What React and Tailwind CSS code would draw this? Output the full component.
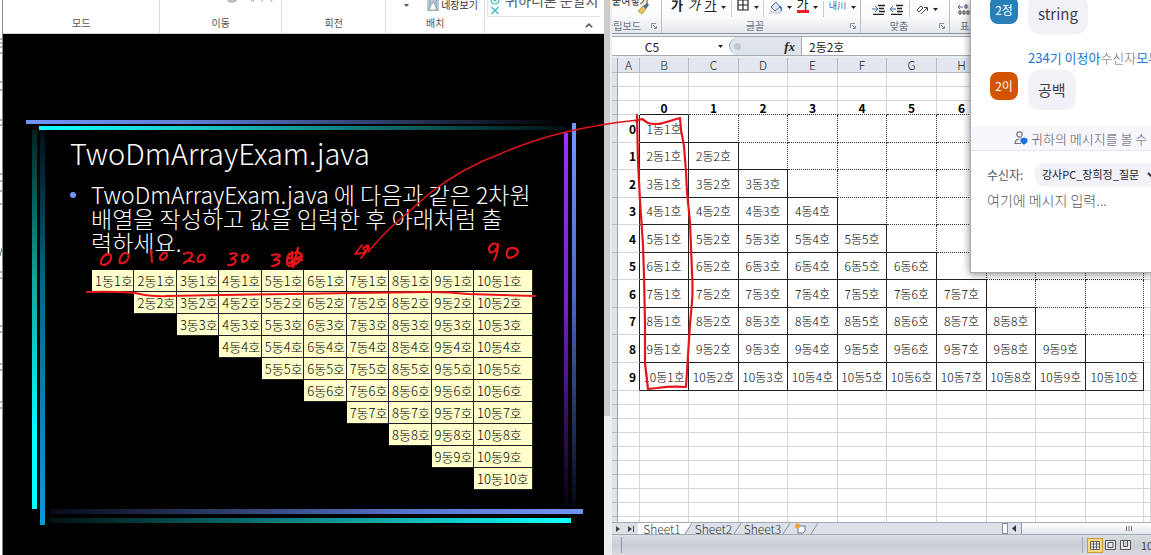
import React from "react";

const KR = "font-['Noto_Sans_CJK_KR','Liberation_Sans',sans-serif]";
const NUMBERS = [1, 2, 3, 4, 5, 6, 7, 8, 9, 10];

function Caret({ className = "" }) {
  return (
    <svg viewBox="0 0 5 3" className={`h-[3px] w-[5px] shrink-0 ${className}`} aria-hidden="true">
      <path d="M0 0h5L2.5 3z" fill="currentColor" />
    </svg>
  );
}

function ViewerGroup({ label, className, children }) {
  return (
    <div className={`flex min-w-0 flex-col justify-end border-r border-[#dcdcdc] ${className}`}>
      {children}
      <div className="pb-[2px] text-center text-[10px] leading-4 text-[#555]">{label}</div>
    </div>
  );
}

function ViewerRibbon() {
  return (
    <header className="flex h-[34px] shrink-0 overflow-hidden border-b border-[#cfd4d1] bg-white">
      <ViewerGroup label="모드" className="flex-[158_1_0%]" />
      <ViewerGroup label="이동" className="flex-[122_1_0%]">
        <div className="flex h-4 items-end justify-end gap-2 pr-2 pb-3">
          <svg viewBox="0 0 12 12" className="h-3 w-3 shrink-0" aria-hidden="true">
            <circle cx="6" cy="6" r="6" fill="#bbb" />
            <path d="M3 6h6M6 3l3 3-3 3" stroke="#fff" strokeWidth="1.4" fill="none" />
          </svg>
          <span className="text-[10px] leading-3 text-[#999]">페이지</span>
        </div>
      </ViewerGroup>
      <ViewerGroup label="회전" className="flex-[104_1_0%]" />
      <ViewerGroup label="배치" className="flex-[99_1_0%]">
        <div className="flex h-4 items-end pb-1 pl-[18px]">
          <Caret className="mb-1 text-[#555]" />
          <svg viewBox="0 0 12 12" className="mr-[2px] ml-[18px] h-3 w-3 shrink-0" aria-hidden="true">
            <rect width="12" height="12" fill="#b7c9d8" />
            <path d="M1 11l5-8 5 8zM3 0v12M9 0v12" fill="#fff" stroke="#7795ad" strokeWidth=".7" />
          </svg>
          <button className="text-[10px] leading-3 whitespace-nowrap text-[#333]">네장보기</button>
        </div>
      </ViewerGroup>
      <div className="flex flex-[118_1_0%] flex-col justify-end overflow-hidden pl-[2px]">
        <div className="mr-1 flex shrink-0 items-end border-b border-l border-[#e3e3e3] pl-[2px]">
          <svg viewBox="0 0 10 20" className="h-5 w-[10px] shrink-0" fill="none" stroke="#35b4cc" aria-hidden="true">
            <circle cx="5" cy="4" r="4" strokeWidth="1.2" />
            <circle cx="5" cy="4" r="1" strokeWidth="1.2" />
            <path d="M1.5 11l7 7M8.500 11l-7 7" strokeWidth="1.2" />
          </svg>
          <span className="pb-2 pl-[5px] text-[14px] leading-4 whitespace-nowrap text-[#555]">귀하디론 문알지</span>
        </div>
        <button aria-label="리본 접기" className="mr-[11px] flex h-4 shrink-0 items-center self-end">
          <svg viewBox="0 0 8 5" className="h-[5px] w-2" fill="none" stroke="#555" strokeWidth="1.6" aria-hidden="true">
            <path d="M.8 4.300L4 1.200l3.200 3.100" />
          </svg>
        </button>
      </div>
    </header>
  );
}

function SlideFrame() {
  return (
    <svg className="pointer-events-none absolute inset-0 h-full w-full" aria-hidden="true">
      <defs>
        <linearGradient id="topBlue"><stop offset="0" stopColor="#7094f5" /><stop offset=".3" stopColor="#6080d8" /><stop offset="1" stopColor="#000" /></linearGradient>
        <linearGradient id="topCyan"><stop offset="0" stopColor="#1ff" /><stop offset=".3" stopColor="#1cc9c9" /><stop offset="1" stopColor="#001010" /></linearGradient>
        <linearGradient id="bottomBlue"><stop offset="0" stopColor="#080a16" /><stop offset=".7" stopColor="#5878d0" /><stop offset="1" stopColor="#7094f5" /></linearGradient>
        <linearGradient id="bottomCyan"><stop offset="0" stopColor="#001010" /><stop offset=".7" stopColor="#12b9b9" /><stop offset="1" stopColor="#1ff" /></linearGradient>
        <linearGradient id="leftCyan" x2="0" y2="1"><stop offset="0" stopColor="#022" /><stop offset=".4" stopColor="#10a59f" /><stop offset=".8" stopColor="#0ff" /></linearGradient>
        <linearGradient id="leftBlue" x2="0" y2="1"><stop offset="0" stopColor="#000f18" /><stop offset=".4" stopColor="#07688c" /><stop offset="1" stopColor="#0d9bd0" /></linearGradient>
        <linearGradient id="rightPurple" x2="0" y2="1"><stop offset="0" stopColor="#a030ff" /><stop offset=".45" stopColor="#7a20c8" /><stop offset="1" stopColor="#080010" /></linearGradient>
        <linearGradient id="rightBlue" x2="0" y2="1"><stop offset="0" stopColor="#7099ff" /><stop offset=".45" stopColor="#4a68c0" /><stop offset="1" stopColor="#050814" /></linearGradient>
      </defs>
      <rect x="23" y="86" width="540" height="4" fill="url(#topBlue)" />
      <rect x="36" y="92" width="527" height="4" fill="url(#topCyan)" />
      <rect x="29" y="96" width="5" height="379" fill="url(#leftCyan)" />
      <rect x="37" y="96" width="5" height="395" fill="url(#leftBlue)" />
      <rect x="47" y="475" width="533" height="5" fill="url(#bottomBlue)" />
      <rect x="46" y="484" width="522" height="5" fill="url(#bottomCyan)" />
      <rect x="561" y="99" width="4" height="373" fill="url(#rightPurple)" />
      <rect x="569" y="89" width="4" height="383" fill="url(#rightBlue)" />
    </svg>
  );
}

function SlideTable() {
  return (
    <table className="mt-4 ml-[22px] w-[441px] table-fixed border-separate border-spacing-0 text-[13px] leading-none font-light text-black">
      <colgroup>
        {NUMBERS.map((n) => <col key={n} className={n === 10 ? "w-[59px]" : ""} />)}
      </colgroup>
      <tbody>
        {NUMBERS.map((room) => (
          <tr key={room}>
            {NUMBERS.map((block) =>
              block < room ? (
                <td key={block} className="h-[22px] p-0" />
              ) : (
                <td key={block} className="h-[22px] overflow-hidden border-r border-b border-[#222] bg-[#ffffcc] py-0 pr-0 pl-[3px] whitespace-nowrap">
                  {block}동{room}호
                </td>
              )
            )}
          </tr>
        ))}
      </tbody>
    </table>
  );
}

function Viewer() {
  return (
    <section className="flex min-w-0 flex-[612_1_0%]">
      <div className="w-[3px] shrink-0 border-r border-[#888] bg-white">
        <svg className="h-full w-[2px]" fill="none" stroke="#4d7a55" aria-hidden="true">
          <path d="M0 39h2M0 43h2M0 47h2M0 53h2M0 82h2M0 90h2M0 120h2M0 125h2M0 174h2M0 181h2M0 191h2M0 204h2M0 256l2-8M0 272h2M0 278h2M0 326h2M0 332h2M0 364h2M0 370h2M0 402h2M0 408h2" />
        </svg>
      </div>
      <div className="flex min-w-0 flex-1 flex-col">
        <ViewerRibbon />
        <main className="relative flex-1 overflow-hidden bg-black pt-[102px] pl-[67px] text-white">
          <SlideFrame />
          <h1 className="text-[29px] leading-8 font-light">TwoDmArrayExam.java</h1>
          <ul className="mt-[14px] mr-[58px]">
            <li className="flex items-start text-[23px] leading-6 font-light">
              <span className="mt-[10px] mr-[15px] h-[6px] w-[6px] shrink-0 rounded-full bg-[#7094f5]" />
              <p className="whitespace-nowrap">
                TwoDmArrayExam.java 에 다음과 같은 2차원<br />배열을 작성하고 값을 입력한 후 아래처럼 출<br />력하세요.
              </p>
            </li>
          </ul>
          <SlideTable />
        </main>
      </div>
      <div className="w-2 shrink-0 bg-[#ededf0]">
        <div className="h-3/4 w-[6px] bg-[#cbcbcd]" />
      </div>
    </section>
  );
}

function ExcelGroup({ label, className, children, launcher = true }) {
  return (
    <div className={`relative flex flex-col justify-end border-r border-[#b9bfc9] ${className}`}>
      <div className="flex h-[18px] items-center overflow-hidden">{children}</div>
      <div className="flex h-[15px] items-center justify-center pr-3 text-[10px] leading-none whitespace-nowrap text-[#6b7685]">{label}</div>
      {launcher && (
        <svg viewBox="0 0 6 6" className="absolute right-1 bottom-1 h-[6px] w-[6px]" fill="none" stroke="#8a929e" aria-hidden="true">
          <path d="M.5 5V.500H5M2 2l3 3M5.500 3v2.500H3" />
        </svg>
      )}
    </div>
  );
}

function ToolDivider() {
  return <span className="h-4 w-px shrink-0 bg-[#c9ced6]" />;
}

function ExcelRibbon() {
  return (
    <div className="flex h-[34px] shrink-0 overflow-hidden border-b border-[#8e949e] bg-linear-to-b from-white via-[#fafbfc] to-[#e4e7ec] text-[#222]">
      <ExcelGroup label={<span className="-ml-4">클립보드</span>} className="w-[50px] shrink-0">
        <span className="-mt-4 text-[10px] leading-3 whitespace-nowrap">붙여넣기</span>
        <svg viewBox="0 0 12 12" className="-ml-3 h-3 w-3 shrink-0" aria-hidden="true">
          <path d="M6 3l3 3-4 5-4-3z" fill="#e8c35a" stroke="#a88224" strokeWidth=".7" />
          <path d="M6 3l4-3 2 2-3 4z" fill="#526b9a" />
        </svg>
      </ExcelGroup>
      <ExcelGroup label="글꼴" className="w-[199px] shrink-0 [&_button]:-mt-2 [&_button]:text-[13px] [&_button]:leading-3">
        <div className="flex w-full items-center justify-between pr-1 pl-[9px]">
          <button className="font-bold">가</button>
          <button className="italic">가</button>
          <button className="underline">가</button>
          <Caret className="-mt-1" />
          <ToolDivider />
          <svg viewBox="0 0 12 12" className="-mt-2 h-3 w-3" fill="none" stroke="#222" strokeWidth="1.2" aria-hidden="true">
            <path d="M1 1h10v10H1zM6 1v10M1 6h10" />
          </svg>
          <Caret className="-mt-1" />
          <ToolDivider />
          <svg viewBox="0 0 13 13" className="-mt-1 h-[13px] w-[13px]" aria-hidden="true">
            <path d="M2 6l5-5 4 5-5 4z" fill="#dfe8f5" stroke="#4b6796" />
            <path d="M11 5q2 3 1 5" stroke="#3a6ec0" strokeWidth="1.5" fill="none" />
            <path d="M0 10h12v3H0z" fill="#d8dade" />
          </svg>
          <Caret className="-mt-1" />
          <span className="flex flex-col items-center">
            <button>가</button>
            <span className="h-[3px] w-3 bg-[#ed1c24]" />
          </span>
          <Caret className="-mt-1" />
          <ToolDivider />
          <span className="-mt-2 text-[9px] leading-[9px] text-[#3c5ca8]">내川</span>
          <Caret className="-mt-1" />
        </div>
      </ExcelGroup>
      <ExcelGroup label="맞춤" className="w-[89px] shrink-0">
        <div className="flex w-full items-center justify-around px-2">
          {[0, 1].map((i) => (
            <svg key={i} viewBox="0 0 13 11" className="h-[11px] w-[13px]" fill="none" aria-hidden="true">
              <path d="M6 1.500h7M7 4.500h5M7 7.500h6M1 10.500h11" stroke="#222" strokeWidth="1.400" />
              <path d={i ? "M0 5h6M3 2L0 5l3 3" : "M0 5h6M3 2L6 5 3 8"} stroke="#3f67ad" />
            </svg>
          ))}
          <ToolDivider />
          <svg viewBox="0 0 12 12" className="h-3 w-3" fill="none" stroke="#444" aria-hidden="true">
            <path d="M1 7l4-4 2 2-4 4zM5 11l6-6M8 4.500h3.500V8" />
          </svg>
          <Caret />
        </div>
      </ExcelGroup>
      <ExcelGroup label="표시 형식" launcher={false} className="w-[72px] shrink-0">
        <div className="flex items-center gap-1 pl-2">
          <svg viewBox="0 0 12 11" className="h-[11px] w-3" fill="none" stroke="#444" aria-hidden="true">
            <path d="M0 3h5M2 1L0 3l2 2" stroke="#3f67ad" />
            <path d="M7 1h2v3H7zM1 7h2v3H1zM5 7h2v3H5zM9 7h2v3H9z" />
          </svg>
        </div>
      </ExcelGroup>
    </div>
  );
}

function FormulaBar() {
  return (
    <div className="mt-[2px] flex h-5 shrink-0 border-y border-[#a5abb5] bg-white text-[12px] leading-none text-[#222]">
      <label className="flex w-[117px] shrink-0 items-center">
        <input aria-label="이름 상자" defaultValue="C5" className="w-20 min-w-0 bg-transparent text-center outline-none" />
        <Caret className="mr-[6px] ml-auto" />
      </label>
      <div className="flex w-[72px] shrink-0 items-center justify-between rounded-l-full border-l border-[#a5abb5] bg-[#dfe3eb] pr-[6px] pl-1">
        <span className="h-[7px] w-[7px] rounded-full bg-[#c1c6cf]" />
        <button aria-label="함수 삽입" className="font-['Liberation_Serif',serif] text-[13px] leading-none font-bold italic">fx</button>
      </div>
      <input aria-label="수식 입력줄" defaultValue="2동2호" className="min-w-0 flex-1 border-l border-[#a5abb5] pl-[7px] outline-none" />
    </div>
  );
}

const COLUMNS = ["A", "B", "C", "D", "E", "F", "G", "H", "I", "J", "K", "L"];
const COLUMN_WIDTHS = [
  "w-[22px]", "w-[49px]", "w-[50px]", "w-[49px]", "w-[50px]", "w-[49px]",
  "w-[50px]", "w-[50px]", "w-[49px]", "w-[50px]", "w-[58px]", "",
];
const GRID_R = "border-r border-r-[#d3d6db]";
const GRID_B = "border-b border-b-[#d3d6db]";
const SOLID_R = "border-r border-r-[#222]";
const SOLID_B = "border-b border-b-[#222]";
const DOTTED_R = "border-r [border-right-style:dotted] border-r-[#333]";
const DOTTED_B = "border-b [border-bottom-style:dotted] border-b-[#333]";

function rightEdge(row, col) {
  if (col < 0) return SOLID_R;
  if (col > 9) return GRID_R;
  return col <= row ? SOLID_R : DOTTED_R;
}

function bottomEdge(row, col) {
  if (col < 0 || col > 9) return GRID_B;
  if (row === 9) return SOLID_B;
  return col <= row + 1 ? SOLID_B : DOTTED_B;
}

function RowHead() {
  return <th className="border-r border-b border-r-[#9da3ad] border-b-[#b5bac3] bg-[#dfe2e9] p-0" />;
}

function BlankRow() {
  return (
    <tr className="h-[14px]">
      <RowHead />
      {COLUMNS.map((c) => <td key={c} className={`p-0 ${GRID_R} ${GRID_B}`} />)}
    </tr>
  );
}

function Sheet() {
  return (
    <div className="mt-[2px] min-h-0 flex-1 overflow-hidden bg-white">
      <table className="w-full table-fixed border-separate border-spacing-0 text-[12px] leading-none text-black">
        <colgroup>
          <col className="w-[6px]" />
          {COLUMNS.map((c, i) => <col key={c} className={COLUMN_WIDTHS[i]} />)}
        </colgroup>
        <thead>
          <tr className="h-[15px]">
            <RowHead />
            {COLUMNS.map((c) => (
              <th key={c} className="overflow-hidden border-r border-b border-[#b5bac3] bg-[#e2e6ee] p-0 font-light text-[#222]">{c === "L" ? "" : c}</th>
            ))}
          </tr>
        </thead>
        <tbody>
          <BlankRow />
          <BlankRow />
          <tr className="h-[14px]">
            <RowHead />
            {COLUMNS.map((c, i) => (
              <td key={c} className={`p-0 text-center font-bold ${GRID_R} ${i === 1 ? SOLID_B : i > 1 && i < 11 ? DOTTED_B : GRID_B}`}>
                {i > 0 && i < 11 ? i - 1 : ""}
              </td>
            ))}
          </tr>
          {NUMBERS.map((n, row) => (
            <tr key={n} className={row % 2 && row < 9 ? "h-[27px]" : "h-[28px]"}>
              <RowHead />
              {COLUMNS.map((c, i) => {
                const col = i - 1;
                return (
                  <td key={c} className={`overflow-hidden p-0 whitespace-nowrap ${col < 0 ? "pr-[3px] text-right font-bold" : "text-center font-light"} ${rightEdge(row, col)} ${bottomEdge(row, col)}`}>
                    {col < 0 ? row : col <= row ? `${row + 1}동${col + 1}호` : ""}
                  </td>
                );
              })}
            </tr>
          ))}
          {NUMBERS.map((n) => <BlankRow key={n} />)}
        </tbody>
      </table>
    </div>
  );
}

function SheetTabs() {
  return (
    <div className="flex h-[13px] shrink-0 items-stretch border-y border-[#a5abb5] bg-[#dce1e9] text-[12px] leading-none text-[#333]">
      <div className="flex w-[26px] shrink-0 items-center justify-around">
        <svg viewBox="0 0 4 6" className="h-[6px] w-1" aria-hidden="true"><path d="M0 0l4 3-4 3z" fill="#444" /></svg>
        <svg viewBox="0 0 6 6" className="h-[6px] w-[6px]" aria-hidden="true"><path d="M0 0l4 3-4 3zM5 0h1v6H5z" fill="#444" /></svg>
      </div>
      {["Sheet1", "Sheet2", "Sheet3"].map((name, i) => (
        <React.Fragment key={name}>
          <button className={`shrink-0 pl-[2px] text-center leading-[11px] font-light ${i === 0 ? "w-[46px] bg-white" : "w-[41px]"}`}>{name}</button>
          <svg viewBox="0 0 8 11" className="h-[11px] w-2 shrink-0" aria-hidden="true">
            {i === 0 && <path d="M0 0h8L0 11z" fill="#fff" />}
            <path d="M8 0L1 11" stroke="#8b929d" />
          </svg>
        </React.Fragment>
      ))}
      <button aria-label="워크시트 삽입" className="ml-1 shrink-0">
        <svg viewBox="0 0 24 11" className="h-[11px] w-6" aria-hidden="true">
          <path d="M4 3h7v5l-2 2H4z" fill="#fff" stroke="#5d74a5" />
          <circle cx="3.500" cy="3" r="2.500" fill="#eda13d" />
          <path d="M24 0l-7 11" stroke="#8b929d" />
        </svg>
      </button>
      <div className="flex-1" />
      <div className="flex w-[149px] shrink-0 items-stretch">
        <span className="mr-1 w-[6px] border border-[#858b96] bg-white" />
        <svg viewBox="0 0 4 7" className="mr-[5px] h-[7px] w-1 self-center" aria-hidden="true"><path d="M4 0v7L0 3.500z" fill="#333" /></svg>
        <div className="flex flex-1 items-center justify-center border-l border-[#9299a5] bg-linear-to-b from-white to-[#e3e6ec] pl-20">
          <svg viewBox="0 0 6 5" className="mr-auto ml-6 h-[5px] w-[6px]" stroke="#777" aria-hidden="true"><path d="M.5 0v5M3 0v5M5.500 0v5" /></svg>
        </div>
      </div>
    </div>
  );
}

function StatusBar() {
  return (
    <footer className="flex h-5 shrink-0 items-center justify-end bg-linear-to-b from-[#dadde3] via-[#c9cdd5] to-[#d8dae0] text-[11px] leading-none text-[#444]">
      <span className="mr-auto ml-[9px] h-4 w-px bg-[#9298a3]" />
      <span className="mr-1 h-4 w-px bg-[#a5abb5]" />
      <button aria-label="기본 보기" className="border border-[#cf9b3a] bg-[#fbd980] p-[2px]">
        <svg viewBox="0 0 10 9" className="h-[9px] w-[10px]" fill="#fff" stroke="#555" strokeWidth=".9" aria-hidden="true"><path d="M.5.500h9v8h-9zM3.500.500v8M6.500.500v8M.5 3h9M.5 6h9" /></svg>
      </button>
      <button aria-label="페이지 레이아웃" className="ml-[2px]">
        <svg viewBox="0 0 11 10" className="h-[10px] w-[11px]" fill="#e7e9ed" stroke="#555" aria-hidden="true"><path d="M.5.500h10v9H.500zM3 2.500h5v5H3z" /></svg>
      </button>
      <button aria-label="페이지 나누기 미리 보기" className="ml-1">
        <svg viewBox="0 0 11 10" className="h-[10px] w-[11px]" fill="#e7e9ed" stroke="#555" aria-hidden="true"><path d="M.5.500h10v9H.500zM3.500.500v6h4v-6" /></svg>
      </button>
      <span className="ml-[10px] w-[10px] overflow-hidden">100%</span>
    </footer>
  );
}

function Excel() {
  return (
    <section className="flex min-w-0 flex-[539_1_0%] flex-col overflow-hidden bg-[#e9ecf1]">
      <ExcelRibbon />
      <FormulaBar />
      <Sheet />
      <SheetTabs />
      <StatusBar />
    </section>
  );
}

function Avatar({ className, children }) {
  return <span className={`flex h-7 w-7 shrink-0 items-center justify-center rounded-lg text-[12px] leading-none text-white ${className}`}>{children}</span>;
}

function Bubble({ children }) {
  return <p className="rounded-xl bg-[#f2f1f8] px-[10px] py-2 text-[15px] leading-6 whitespace-nowrap text-[#3f3f4d]">{children}</p>;
}

function Chat() {
  return (
    <aside className="absolute top-0 right-0 flex h-[273px] w-[181px] flex-col overflow-hidden border-b border-l border-[#aaa] bg-white shadow-[0_1px_8px_rgba(0,0,0,0.5)]">
      <div className="flex h-[126px] shrink-0 flex-col justify-end pb-4 pl-[19px]">
        <div className="flex shrink-0 items-start gap-[10px]">
          <Avatar className="mt-[2px] bg-[#2980b9]">2정</Avatar>
          <Bubble>string</Bubble>
        </div>
        <p className="mt-[14px] mb-[2px] ml-[38px] shrink-0 text-[13px] leading-5 font-light whitespace-nowrap text-[#666675]">
          <a href="#sender" className="font-normal text-[#2076d8]">234기 이정아</a>수신자<a href="#everyone" className="font-normal text-[#2076d8]">모두</a>
        </p>
        <div className="flex shrink-0 items-start gap-[10px]">
          <Avatar className="mt-[2px] bg-[#d35400]">2이</Avatar>
          <Bubble>공백</Bubble>
        </div>
      </div>
      <div className="flex h-[25px] shrink-0 items-center gap-[3px] border-b border-[#e6e6ef] bg-[#f7f7fd] pl-[43px] text-[13px] leading-none font-light whitespace-nowrap text-[#555564]">
        <svg viewBox="0 0 14 14" className="h-[14px] w-[14px] shrink-0" fill="none" aria-hidden="true">
          <circle cx="5.500" cy="3.500" r="2.700" stroke="#777784" strokeWidth="1.200" />
          <path d="M7 12.500H1c0-3 2-4.500 4.500-4.500" stroke="#777784" strokeWidth="1.200" />
          <path d="M10 6.500l3.500 1.300v2.700q-.8 2-3.500 3.200-2.700-1.200-3.500-3.200V7.800z" fill="#1c70dc" />
        </svg>
        <span>귀하의 메시지를 볼 수 있는 사람</span>
      </div>
      <div className="mt-3 flex h-[23px] shrink-0 items-center pl-4">
        <label htmlFor="recipient" className="w-12 shrink-0 text-[12px] leading-none text-[#555563]">수신자:</label>
        <div className="relative flex h-full flex-1 items-center rounded-l-lg bg-[#f2f1f8] text-[#22222e]">
          <select id="recipient" className="h-full w-full appearance-none bg-transparent pl-[7px] text-[11px] outline-none">
            <option>강사PC_장희정_질문</option>
          </select>
          <svg viewBox="0 0 8 6" className="pointer-events-none absolute -right-1 h-[6px] w-2" fill="none" stroke="currentColor" strokeWidth="1.800" aria-hidden="true">
            <path d="M1 1l3 3 3-3" />
          </svg>
        </div>
      </div>
      <textarea aria-label="메시지" placeholder="여기에 메시지 입력..." className="mt-1 min-h-0 flex-1 resize-none pl-4 text-[14px] leading-5 font-light outline-none placeholder:text-[#555564]" />
    </aside>
  );
}

function Ink() {
  return (
    <svg className="pointer-events-none absolute top-0 left-0 h-[555px] w-[1151px]" fill="none" stroke="#e5131a" strokeWidth="2.100" strokeLinecap="round" strokeLinejoin="round" aria-hidden="true">
      <path d="M368 252Q384 233 398 221T430 193Q462 168 500 154Q532 140 566 132Q600 124 638 120" strokeWidth="1.500" />
      <path d="M362 245l-7 9 8-1 6-5-1-3-5 3 3 4-5 6M366 246l3 5" strokeWidth="1.800" />
      <path d="M636 121l6-2 6 4q6 2 15 0l17-5 1 12 3 16 2 26 1 20 3 30 1 25 1 25q1 18 0 30l-2 22-4 63q-15-1-29 1l-9 1-3-26 0-38-1-50-1-30-3-44-2-40-1-46" strokeWidth="2.200" />
      <path d="M87 292q25-1 48 1 18 4 32 3l55-1 70-1 60-1 78-1q20 0 38 2l67 2" strokeWidth="2" />
      <path d="M106 254q-6 5-5 10 4 3 9-3 3-7-2-7l-4 2M124 253q-6 5-4 10 5 1 8-4 2-6-3-6z" />
      <path d="M151 250l1 12M163 253q-5 5-2 7 4 0 6-4 1-4-4-3z" />
      <path d="M184 254q6-3 8 0 1 4-8 9 6-4 10-1M199 256q-3 5 0 6 6-1 6-6-3-3-6 0" />
      <path d="M230 254q7-2 7 1l-6 4q6-1 4 4-3 3-7 2M243 256q-2 5 0 6 6-2 5-6-3-3-6 0" />
      <path d="M272 255q7-2 8 1l-6 4q7-1 5 3-3 3-7 3" />
      <path d="M289 254q-4 9 0 12 10-1 13-10-2-6-11-2zM298 248l-5 19M292 252v13M289 258l13 2M289 263l12-7" strokeWidth="2.400" />
      <path d="M498 245q-6-4-9 3 0 7 6 3 3-4 3-7 0 10-4 16M508 249q-3 7 1 9 8-1 9-7-3-5-10-2" />
    </svg>
  );
}

export default function App() {
  return (
    <div className={`relative flex h-screen min-h-[555px] overflow-hidden ${KR}`}>
      <Viewer />
      <Excel />
      <Chat />
      <Ink />
    </div>
  );
}
